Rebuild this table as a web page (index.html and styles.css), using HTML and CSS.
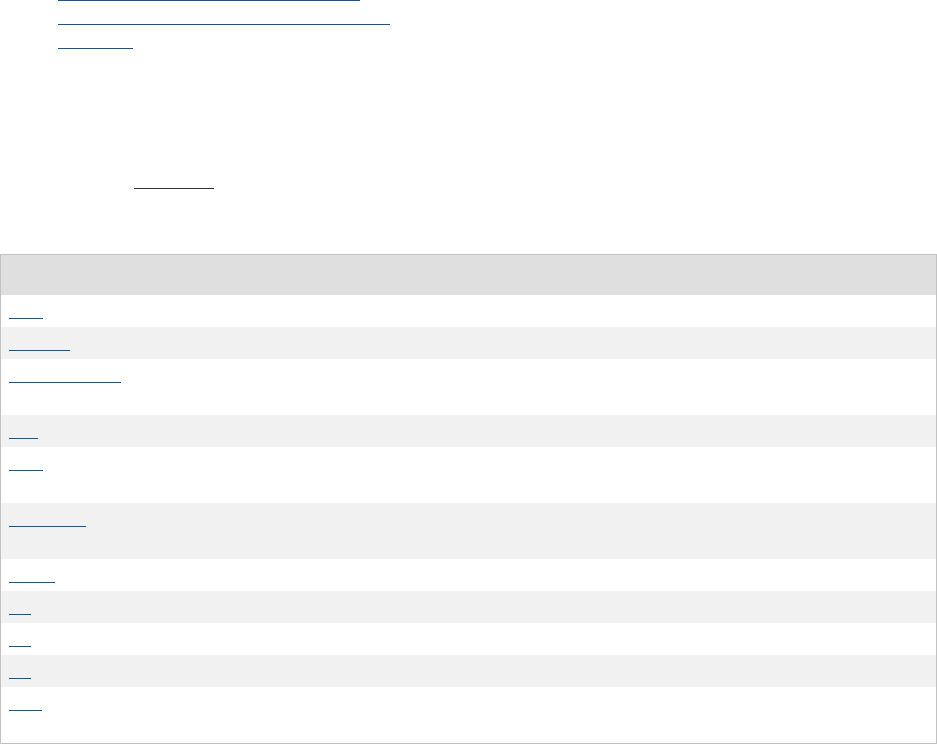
FILE: index.html
```html
<!DOCTYPE html>
<html lang="en">
<head>
<meta charset="utf-8">
<title>Index</title>
<link rel="stylesheet" href="styles.css">
</head>
<body>
<ul class="toc">
  <li><a class="ln w302" href="#a" aria-label="link"></a></li>
  <li><a class="ln w332" href="#b" aria-label="link"></a></li>
  <li><a class="ln w75" href="#c" aria-label="link"></a></li>
</ul>
<p class="note"><span class="dark"></span></p>
<table class="grid">
  <thead><tr><th></th><th></th></tr></thead>
  <tbody>
    <tr><td><a class="ln w34" href="#1" aria-label="link"></a></td><td></td></tr>
    <tr><td><a class="ln w61" href="#2" aria-label="link"></a></td><td></td></tr>
    <tr class="tall"><td><a class="ln w112" href="#3" aria-label="link"></a></td><td></td></tr>
    <tr><td><a class="ln w29" href="#4" aria-label="link"></a></td><td></td></tr>
    <tr class="tall"><td><a class="ln w34" href="#5" aria-label="link"></a></td><td></td></tr>
    <tr class="tall"><td><a class="ln w77" href="#6" aria-label="link"></a></td><td></td></tr>
    <tr><td><a class="ln w46" href="#7" aria-label="link"></a></td><td></td></tr>
    <tr><td><a class="ln w22" href="#8" aria-label="link"></a></td><td></td></tr>
    <tr><td><a class="ln w22" href="#9" aria-label="link"></a></td><td></td></tr>
    <tr><td><a class="ln w22" href="#10" aria-label="link"></a></td><td></td></tr>
    <tr class="tall"><td><a class="ln w33" href="#11" aria-label="link"></a></td><td></td></tr>
  </tbody>
</table>
</body>
</html>
```
FILE: styles.css
```css
html, body {
  margin: 0;
  padding: 0;
  background: #ffffff;
  font-family: "Liberation Sans", Arial, sans-serif;
  font-size: 16px;
  overflow: hidden;
}

.toc {
  list-style: none;
  margin: -23px 0 0 0;
  padding: 0 0 0 58px;
}

.toc li {
  height: 24px;
  display: flex;
  align-items: flex-start;
}

.ln {
  display: block;
  height: 20px;
  border-bottom: 1px solid #0b57a4;
  box-sizing: border-box;
  text-decoration: none;
}

.toc .ln {
  height: 24px;
}

.note {
  margin: 116px 0 0 0;
  padding-left: 134px;
  height: 24px;
}

.dark {
  display: block;
  width: 80px;
  height: 24px;
  box-sizing: border-box;
  border-bottom: 1px solid #333333;
}

.grid {
  margin-top: 65px;
  width: 100%;
  border-collapse: separate;
  border-spacing: 0;
  border: 1px solid #c2c2c2;
}

.grid th {
  background: #dfdfdf;
  height: 40px;
  padding: 0;
}

.grid td {
  height: 32px;
  padding: 4px 8px 0 8px;
  box-sizing: border-box;
  vertical-align: top;
}

.grid tbody tr:nth-child(even) td {
  background: #f1f1f1;
}

.grid tr.tall td {
  height: 56px;
}

.w22 { width: 22px; }
.w29 { width: 29px; }
.w33 { width: 33px; }
.w34 { width: 34px; }
.w46 { width: 46px; }
.w61 { width: 61px; }
.w75 { width: 75px; }
.w77 { width: 77px; }
.w112 { width: 112px; }
.w302 { width: 302px; }
.w332 { width: 332px; }
```
